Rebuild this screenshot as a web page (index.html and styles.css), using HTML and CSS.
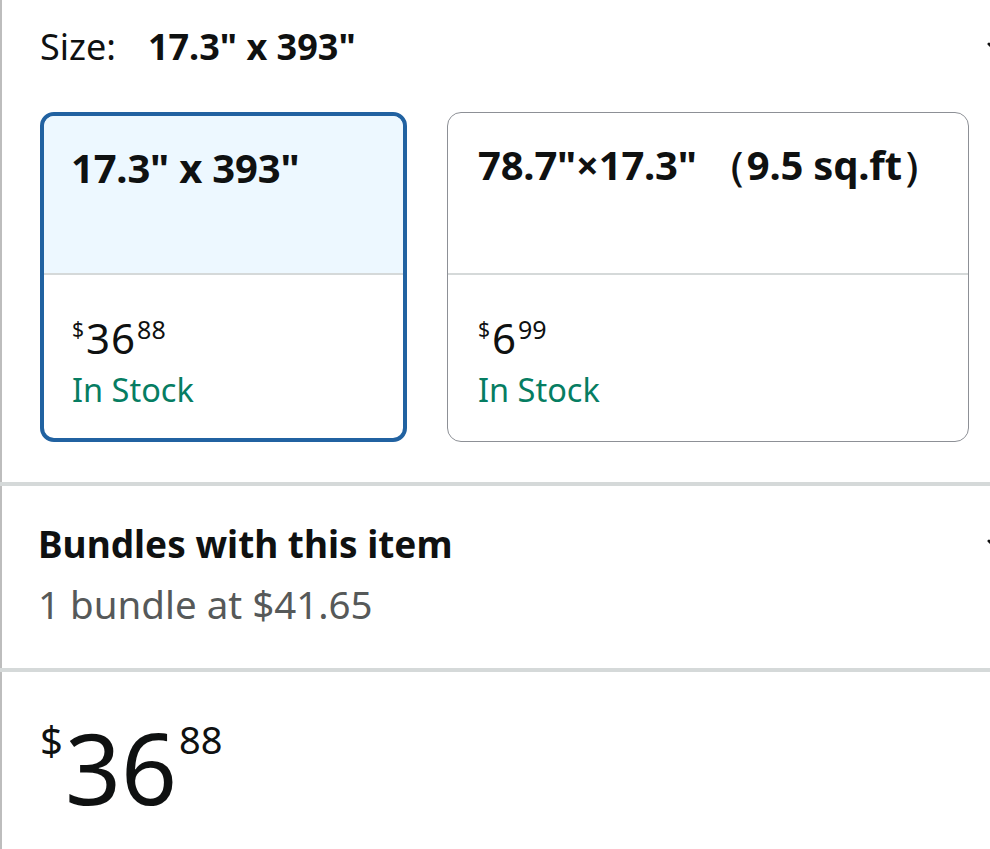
FILE: index.html
```html
<!DOCTYPE html>
<html>
<head>
<meta charset="utf-8">
<link rel="stylesheet" href="styles.css">
</head>
<body>
<div class="page">
  <section class="size-section">
    <div class="size-header">
      <div class="size-label">Size:<span class="size-value">17.3" x 393"</span></div>
      <svg class="chev" viewBox="0 0 20 20" width="20" height="20"><path d="M3 7 L10 14 L17 7" fill="none" stroke="#111" stroke-width="3" stroke-linecap="round" stroke-linejoin="round"/></svg>
    </div>
    <div class="options">
      <div class="card selected">
        <div class="card-top">17.3" x 393"</div>
        <div class="card-bottom">
          <div class="price"><sup class="cur">$</sup><span class="whole">36</span><sup class="frac">88</sup></div>
          <div class="stock">In Stock</div>
        </div>
      </div>
      <div class="card">
        <div class="card-top">78.7"×17.3" （9.5 sq.ft）</div>
        <div class="card-bottom">
          <div class="price"><sup class="cur">$</sup><span class="whole">6</span><sup class="frac">99</sup></div>
          <div class="stock">In Stock</div>
        </div>
      </div>
    </div>
  </section>
  <div class="divider"></div>
  <section class="bundles">
    <div class="bundles-text">
      <div class="bundles-title">Bundles with this item</div>
      <div class="bundles-sub">1 bundle at $41.65</div>
    </div>
    <svg class="chev chev-bundle" viewBox="0 0 20 20" width="20" height="20"><path d="M3 7 L10 14 L17 7" fill="none" stroke="#111" stroke-width="3" stroke-linecap="round" stroke-linejoin="round"/></svg>
  </section>
  <div class="divider"></div>
  <section class="main-price">
    <div class="big-price"><sup class="cur">$</sup><span class="whole">36</span><sup class="frac">88</sup></div>
  </section>
</div>
</body>
</html>
```
FILE: styles.css
```css
html, body {
  margin: 0;
  padding: 0;
  background: #fff;
  overflow: hidden;
}
body {
  font-family: "Noto Sans", "Open Sans", sans-serif;
  color: #0f1111;
}
.page {
  border-left: 2px solid #bdbdbd;
  min-height: 849px;
  width: 1010px;
}
.size-section {
  padding: 22px 0 40px 38px;
}
.size-header {
  display: flex;
  justify-content: space-between;
  align-items: center;
  height: 50px;
}
.size-label {
  font-size: 36px;
  line-height: 50px;
}
.size-value {
  font-weight: 700;
  margin-left: 32px;
}
.chev {
  flex: none;
  margin-right: 6px;
}
.options {
  display: grid;
  grid-template-columns: 367px 522px;
  gap: 40px;
  margin-top: 40px;
}
.card {
  height: 330px;
  box-sizing: border-box;
  border: 1.5px solid #8d9096;
  border-radius: 14px;
  overflow: hidden;
  display: flex;
  flex-direction: column;
}
.card.selected {
  border: 4px solid #2162a1;
}
.card-top {
  height: 162px;
  box-sizing: border-box;
  border-bottom: 2px solid #d5d9d9;
  padding: 25px 0 0 30px;
  font-size: 40px;
  font-weight: 700;
  line-height: 54px;
  letter-spacing: -0.2px;
}
.card.selected .card-top {
  background: #edf8ff;
  padding-left: 27px;
  height: 159px;
}
.card-bottom {
  padding: 42px 0 0 30px;
}
.card.selected .card-bottom {
  padding-left: 28px;
}
.price {
  display: flex;
  align-items: flex-start;
  line-height: 1;
}
.price .cur {
  font-size: 21px;
  margin-top: 2px;
  margin-right: 2px;
}
.price .whole {
  font-size: 42px;
  letter-spacing: 1px;
}
.price .frac {
  font-size: 25px;
  margin-top: 0px;
  margin-left: 1px;
}
sup {
  vertical-align: baseline;
  line-height: 1;
}
.stock {
  color: #067d62;
  font-size: 32.5px;
  line-height: 42px;
  margin-top: 10px;
}
.divider {
  height: 4px;
  background: #d5d9d9;
  margin-left: -2px;
}
.bundles {
  display: flex;
  justify-content: space-between;
  align-items: flex-start;
  padding: 32px 0 38px 36px;
}
.bundles-title {
  font-size: 37px;
  font-weight: 700;
  line-height: 52px;
}
.bundles-sub {
  font-size: 38.5px;
  color: #565959;
  line-height: 52px;
  margin-top: 8px;
}
.chev-bundle {
  margin-top: 16px;
}
.main-price {
  padding: 46px 0 0 38px;
}
.big-price {
  display: flex;
  align-items: flex-start;
  line-height: 1;
}
.big-price .cur {
  font-size: 40px;
  margin-top: 2px;
}
.big-price .whole {
  font-size: 98px;
  margin-left: 2px;
}
.big-price .frac {
  font-size: 38px;
  margin-left: 2px;
  margin-top: 2px;
}
```
